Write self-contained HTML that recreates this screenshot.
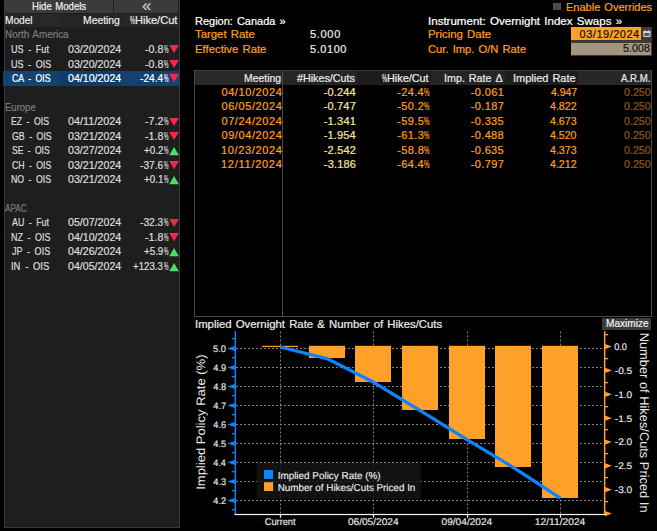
<!DOCTYPE html>
<html><head><meta charset="utf-8"><title>Implied Overnight Rate</title>
<style>
html,body{margin:0;padding:0;background:#000;}
body{width:657px;height:531px;position:relative;overflow:hidden;font-family:"Liberation Sans",sans-serif;}
.t{position:absolute;white-space:pre;line-height:1;transform-origin:0 0;display:block;-webkit-text-stroke:0.22px currentColor;}
.panel{position:absolute;left:4px;top:-1px;width:173.6px;height:527px;background:#1e1e1e;border:1px solid #3a3a3a;}
.btn{position:absolute;background:#3b3b3b;}
.hdr{position:absolute;background:#282828;}
.hdr2{position:absolute;background:#252525;}
.sel{position:absolute;background:#15416f;}
.sel2{position:absolute;background:#123c68;}
.tri{position:absolute;}
.thdr{position:absolute;background:#1d1d1d;}
.thdr2{position:absolute;background:#2a2a2a;}
.ln{position:absolute;background:#4a4a4a;}
svg.chart{position:absolute;left:0;top:0;}
svg.chart text{font-family:"Liberation Sans",sans-serif;stroke-width:0.15px;text-rendering:geometricPrecision;}
.g{stroke:#828282;stroke-width:1;stroke-dasharray:2 2;}
</style></head>
<body>
<div class="panel"></div>
<div class="btn" style="left:5px;top:0.4px;width:108.2px;height:12.3px"></div>
<div class="btn" style="left:114.4px;top:0.4px;width:64px;height:12.3px"></div>
<div class="hdr" style="left:5px;top:13.6px;width:173.4px;height:13.6px"></div>
<div class="hdr2" style="left:59px;top:13.6px;width:62.5px;height:13.6px"></div>
<div class="sel" style="left:3px;top:71px;width:176px;height:15px"></div>
<div class="sel2" style="left:59px;top:71px;width:62.5px;height:15px"></div>
<svg class="tri" style="left:168.6px;top:45.35px" width="10" height="9" viewBox="0 0 10 9"><path d="M0.2 0H9.9L5.05 8.1Z" fill="#f4284e"/></svg>
<svg class="tri" style="left:168.6px;top:59.82px" width="10" height="9" viewBox="0 0 10 9"><path d="M0.2 0H9.9L5.05 8.1Z" fill="#f4284e"/></svg>
<svg class="tri" style="left:168.6px;top:74.28px" width="10" height="9" viewBox="0 0 10 9"><path d="M0.2 0H9.9L5.05 8.1Z" fill="#f4284e"/></svg>
<svg class="tri" style="left:168.6px;top:117.69px" width="10" height="9" viewBox="0 0 10 9"><path d="M0.2 0H9.9L5.05 8.1Z" fill="#f4284e"/></svg>
<svg class="tri" style="left:168.6px;top:132.15px" width="10" height="9" viewBox="0 0 10 9"><path d="M0.2 0H9.9L5.05 8.1Z" fill="#f4284e"/></svg>
<svg class="tri" style="left:168.6px;top:146.87px" width="10" height="9" viewBox="0 0 10 9"><path d="M0.2 8.3H9.9L5.05 0.1Z" fill="#48e06a"/></svg>
<svg class="tri" style="left:168.6px;top:161.09px" width="10" height="9" viewBox="0 0 10 9"><path d="M0.2 0H9.9L5.05 8.1Z" fill="#f4284e"/></svg>
<svg class="tri" style="left:168.6px;top:175.80px" width="10" height="9" viewBox="0 0 10 9"><path d="M0.2 8.3H9.9L5.05 0.1Z" fill="#48e06a"/></svg>
<svg class="tri" style="left:168.6px;top:218.95px" width="10" height="9" viewBox="0 0 10 9"><path d="M0.2 0H9.9L5.05 8.1Z" fill="#f4284e"/></svg>
<svg class="tri" style="left:168.6px;top:233.42px" width="10" height="9" viewBox="0 0 10 9"><path d="M0.2 0H9.9L5.05 8.1Z" fill="#f4284e"/></svg>
<svg class="tri" style="left:168.6px;top:248.14px" width="10" height="9" viewBox="0 0 10 9"><path d="M0.2 8.3H9.9L5.05 0.1Z" fill="#48e06a"/></svg>
<svg class="tri" style="left:168.6px;top:262.61px" width="10" height="9" viewBox="0 0 10 9"><path d="M0.2 8.3H9.9L5.05 0.1Z" fill="#48e06a"/></svg>
<div style="position:absolute;left:553.4px;top:3px;width:8px;height:7.4px;background:#4b4b4b"></div>
<div style="position:absolute;left:571px;top:27px;width:80.8px;height:29.3px;background:#3a3a3a"></div>
<div style="position:absolute;left:571.3px;top:27.2px;width:70px;height:13.3px;background:#ffa02a"></div>
<div style="position:absolute;left:571.4px;top:42.7px;width:79.3px;height:12.5px;background:#a49581"></div>
<svg style="position:absolute;left:641.5px;top:28px" width="10" height="11" viewBox="0 0 10 11"><rect x="1.3" y="3" width="7.1" height="6" fill="#5a5a5a"/><rect x="1.8" y="3.6" width="6.1" height="4.9" fill="none" stroke="#d2d2d2" stroke-width="1"/><rect x="1.3" y="3" width="7.1" height="2" fill="#d2d2d2"/><rect x="2.6" y="1.7" width="1" height="1.4" fill="#a8a8a8"/><rect x="6.2" y="1.7" width="1" height="1.4" fill="#a8a8a8"/></svg>
<div class="thdr" style="left:194px;top:70.4px;width:457.6px;height:14.6px"></div>
<div style="position:absolute;left:194.0px;top:70.4px;width:88.0px;height:14.6px;background:#292929"></div>
<div style="position:absolute;left:283.0px;top:70.4px;width:73.8px;height:14.6px;background:#252525"></div>
<div style="position:absolute;left:430.8px;top:70.4px;width:73.8px;height:14.6px;background:#252525"></div>
<div style="position:absolute;left:577.6px;top:70.4px;width:73.4px;height:14.6px;background:#272727"></div>
<div style="position:absolute;left:194px;top:70.2px;width:457.6px;height:1px;background:#383838"></div>
<div class="ln" style="left:193.6px;top:70.2px;width:1px;height:246.4px"></div>
<div class="ln" style="left:281.8px;top:70.2px;width:1px;height:246.4px"></div>
<div class="ln" style="left:651px;top:70.2px;width:1px;height:246.4px"></div>
<div class="ln" style="left:193.6px;top:315.6px;width:458.4px;height:1px"></div>
<div class="btn" style="left:601.8px;top:318.3px;width:49.5px;height:11.5px"></div>
<svg class="chart" width="657" height="531" viewBox="0 0 657 531">
<line x1="280.5" y1="331.5" x2="280.5" y2="513.5" class="g"/>
<line x1="373.5" y1="331.5" x2="373.5" y2="513.5" class="g"/>
<line x1="467.5" y1="331.5" x2="467.5" y2="513.5" class="g"/>
<line x1="560.5" y1="331.5" x2="560.5" y2="513.5" class="g"/>
<line x1="236" y1="348.50" x2="604" y2="348.50" class="g"/>
<line x1="236" y1="367.50" x2="604" y2="367.50" class="g"/>
<line x1="236" y1="386.50" x2="604" y2="386.50" class="g"/>
<line x1="236" y1="405.50" x2="604" y2="405.50" class="g"/>
<line x1="236" y1="424.50" x2="604" y2="424.50" class="g"/>
<line x1="236" y1="443.50" x2="604" y2="443.50" class="g"/>
<line x1="236" y1="462.50" x2="604" y2="462.50" class="g"/>
<line x1="236" y1="481.50" x2="604" y2="481.50" class="g"/>
<line x1="236" y1="500.50" x2="604" y2="500.50" class="g"/>
<rect x="256.7" y="463.1" width="164.2" height="35.3" rx="2" fill="#151515" fill-opacity="0.82"/>
<rect x="262.00" y="345.80" width="36.00" height="1.20" fill="#ffa028"/>
<rect x="309.00" y="345.80" width="36.00" height="12.20" fill="#ffa028"/>
<rect x="355.00" y="345.80" width="36.00" height="36.20" fill="#ffa028"/>
<rect x="402.00" y="345.80" width="36.00" height="64.20" fill="#ffa028"/>
<rect x="449.00" y="345.80" width="36.00" height="93.20" fill="#ffa028"/>
<rect x="495.00" y="345.80" width="36.00" height="121.20" fill="#ffa028"/>
<rect x="542.00" y="345.80" width="36.00" height="152.20" fill="#ffa028"/>
<polyline points="280.30,346.98 326.97,358.57 373.64,382.32 420.31,410.63 466.98,439.70 513.65,467.63 560.32,498.22" fill="none" stroke="#0a84ff" stroke-width="3.3" stroke-linejoin="round" stroke-linecap="butt"/>
<rect x="234.6" y="331.2" width="1.45" height="183.9" fill="#0a84ff"/>
<path d="M227.3 348.50L235 345.90V351.10Z" fill="#0a84ff"/>
<path d="M227.3 367.50L235 364.90V370.10Z" fill="#0a84ff"/>
<path d="M227.3 386.50L235 383.90V389.10Z" fill="#0a84ff"/>
<path d="M227.3 405.50L235 402.90V408.10Z" fill="#0a84ff"/>
<path d="M227.3 424.50L235 421.90V427.10Z" fill="#0a84ff"/>
<path d="M227.3 443.50L235 440.90V446.10Z" fill="#0a84ff"/>
<path d="M227.3 462.50L235 459.90V465.10Z" fill="#0a84ff"/>
<path d="M227.3 481.50L235 478.90V484.10Z" fill="#0a84ff"/>
<path d="M227.3 500.50L235 497.90V503.10Z" fill="#0a84ff"/>
<rect x="231.8" y="338.00" width="3" height="1.3" fill="#0a84ff"/>
<rect x="231.8" y="357.00" width="3" height="1.3" fill="#0a84ff"/>
<rect x="231.8" y="376.00" width="3" height="1.3" fill="#0a84ff"/>
<rect x="231.8" y="395.00" width="3" height="1.3" fill="#0a84ff"/>
<rect x="231.8" y="414.00" width="3" height="1.3" fill="#0a84ff"/>
<rect x="231.8" y="433.00" width="3" height="1.3" fill="#0a84ff"/>
<rect x="231.8" y="452.00" width="3" height="1.3" fill="#0a84ff"/>
<rect x="231.8" y="471.00" width="3" height="1.3" fill="#0a84ff"/>
<rect x="231.8" y="490.00" width="3" height="1.3" fill="#0a84ff"/>
<rect x="231.8" y="509.00" width="3" height="1.3" fill="#0a84ff"/>
<rect x="603.9" y="331.2" width="1.5" height="183.9" fill="#ffa028"/>
<path d="M611.9 346.60L605 344.00V349.20Z" fill="#ffa028"/>
<path d="M611.9 370.45L605 367.85V373.05Z" fill="#ffa028"/>
<path d="M611.9 394.30L605 391.70V396.90Z" fill="#ffa028"/>
<path d="M611.9 418.15L605 415.55V420.75Z" fill="#ffa028"/>
<path d="M611.9 442.00L605 439.40V444.60Z" fill="#ffa028"/>
<path d="M611.9 465.85L605 463.25V468.45Z" fill="#ffa028"/>
<path d="M611.9 489.70L605 487.10V492.30Z" fill="#ffa028"/>
<path d="M611.9 513.55L605 510.95V516.15Z" fill="#ffa028"/>
<rect x="605" y="334.00" width="3.2" height="1.3" fill="#ffa028"/>
<rect x="605" y="358.00" width="3.2" height="1.3" fill="#ffa028"/>
<rect x="605" y="382.00" width="3.2" height="1.3" fill="#ffa028"/>
<rect x="605" y="406.00" width="3.2" height="1.3" fill="#ffa028"/>
<rect x="605" y="429.00" width="3.2" height="1.3" fill="#ffa028"/>
<rect x="605" y="453.00" width="3.2" height="1.3" fill="#ffa028"/>
<rect x="605" y="477.00" width="3.2" height="1.3" fill="#ffa028"/>
<rect x="605" y="501.00" width="3.2" height="1.3" fill="#ffa028"/>
<rect x="234.6" y="513.9" width="370.8" height="1.2" fill="#f4f4f4"/>
<rect x="279.85" y="514" width="1.3" height="3.7" fill="#f4f4f4"/>
<rect x="372.85" y="514" width="1.3" height="3.7" fill="#f4f4f4"/>
<rect x="466.85" y="514" width="1.3" height="3.7" fill="#f4f4f4"/>
<rect x="559.85" y="514" width="1.3" height="3.7" fill="#f4f4f4"/>
<rect x="264" y="470" width="9.1" height="8.9" fill="#0a84ff"/>
<rect x="264" y="482.2" width="9.1" height="8.8" fill="#ffa028"/>
<text x="213.05" y="352.00" font-size="9.5" fill="#eaeaea" stroke="#eaeaea" textLength="13.06" lengthAdjust="spacingAndGlyphs">5.0</text>
<text x="213.30" y="371.00" font-size="9.5" fill="#eaeaea" stroke="#eaeaea" textLength="12.81" lengthAdjust="spacingAndGlyphs">4.9</text>
<text x="213.30" y="390.00" font-size="9.5" fill="#eaeaea" stroke="#eaeaea" textLength="12.81" lengthAdjust="spacingAndGlyphs">4.8</text>
<text x="213.30" y="409.00" font-size="9.5" fill="#eaeaea" stroke="#eaeaea" textLength="12.81" lengthAdjust="spacingAndGlyphs">4.7</text>
<text x="213.30" y="428.00" font-size="9.5" fill="#eaeaea" stroke="#eaeaea" textLength="12.81" lengthAdjust="spacingAndGlyphs">4.6</text>
<text x="213.30" y="447.00" font-size="9.5" fill="#eaeaea" stroke="#eaeaea" textLength="12.81" lengthAdjust="spacingAndGlyphs">4.5</text>
<text x="213.30" y="466.00" font-size="9.5" fill="#eaeaea" stroke="#eaeaea" textLength="12.57" lengthAdjust="spacingAndGlyphs">4.4</text>
<text x="213.30" y="485.00" font-size="9.5" fill="#eaeaea" stroke="#eaeaea" textLength="12.81" lengthAdjust="spacingAndGlyphs">4.3</text>
<text x="213.30" y="504.00" font-size="9.5" fill="#eaeaea" stroke="#eaeaea" textLength="12.81" lengthAdjust="spacingAndGlyphs">4.2</text>
<text x="614.16" y="350.00" font-size="9.5" fill="#eaeaea" stroke="#eaeaea" textLength="12.86" lengthAdjust="spacingAndGlyphs">0.0</text>
<text x="614.83" y="373.85" font-size="9.5" fill="#eaeaea" stroke="#eaeaea" textLength="17.40" lengthAdjust="spacingAndGlyphs">-0.5</text>
<text x="614.83" y="397.70" font-size="9.5" fill="#eaeaea" stroke="#eaeaea" textLength="17.40" lengthAdjust="spacingAndGlyphs">-1.0</text>
<text x="614.83" y="421.55" font-size="9.5" fill="#eaeaea" stroke="#eaeaea" textLength="17.40" lengthAdjust="spacingAndGlyphs">-1.5</text>
<text x="614.83" y="445.40" font-size="9.5" fill="#eaeaea" stroke="#eaeaea" textLength="17.40" lengthAdjust="spacingAndGlyphs">-2.0</text>
<text x="614.83" y="469.25" font-size="9.5" fill="#eaeaea" stroke="#eaeaea" textLength="17.40" lengthAdjust="spacingAndGlyphs">-2.5</text>
<text x="614.83" y="493.10" font-size="9.5" fill="#eaeaea" stroke="#eaeaea" textLength="17.40" lengthAdjust="spacingAndGlyphs">-3.0</text>
<text x="264.76" y="525.00" font-size="9.75" fill="#eaeaea" stroke="#eaeaea" textLength="30.81" lengthAdjust="spacingAndGlyphs">Current</text>
<text x="347.94" y="525.00" font-size="9.75" fill="#eaeaea" stroke="#eaeaea" textLength="50.62" lengthAdjust="spacingAndGlyphs">06/05/2024</text>
<text x="441.54" y="525.00" font-size="9.75" fill="#eaeaea" stroke="#eaeaea" textLength="50.72" lengthAdjust="spacingAndGlyphs">09/04/2024</text>
<text x="534.88" y="525.00" font-size="9.75" fill="#eaeaea" stroke="#eaeaea" textLength="50.41" lengthAdjust="spacingAndGlyphs">12/11/2024</text>
<text x="277.66" y="479.00" font-size="10" fill="#eaeaea" stroke="#eaeaea" textLength="102.96" lengthAdjust="spacingAndGlyphs">Implied Policy Rate (%)</text>
<text x="277.66" y="491.00" font-size="10" fill="#eaeaea" stroke="#eaeaea" textLength="137.69" lengthAdjust="spacingAndGlyphs">Number of Hikes/Cuts Priced In</text>
<text transform="translate(205.1,488.80) rotate(-90)" x="-1.06" y="0" font-size="12.3" fill="#eaeaea" textLength="135.40" lengthAdjust="spacingAndGlyphs">Implied Policy Rate (%)</text>
<text transform="translate(639.6,333.70) rotate(90)" x="-1.02" y="0" font-size="12.6" fill="#eaeaea" textLength="179.86" lengthAdjust="spacingAndGlyphs">Number of Hikes/Cuts Priced In</text>
</svg>
<span class="t" style="left:31.64px;top:1.00px;font-size:11px;color:#f0f0f0;word-spacing:1px;transform:scaleX(0.8713)">Hide Models</span>
<span class="t" style="left:142.17px;top:-3.00px;font-size:17px;color:#cfcfcf;transform:scaleX(0.9828)">«</span>
<span class="t" style="left:4.80px;top:15.00px;font-size:11px;color:#eaeaea;transform:scaleX(0.9198)">Model</span>
<span class="t" style="left:83.29px;top:15.00px;font-size:11px;color:#eaeaea;transform:scaleX(0.9421)">Meeting</span>
<span class="t" style="left:129.90px;top:15.00px;font-size:11px;color:#eaeaea;transform:scaleX(0.5104)">%</span>
<span class="t" style="left:135.05px;top:15.00px;font-size:11px;color:#eaeaea;transform:scaleX(1.0048)">Hike/Cut</span>
<span class="t" style="left:4.82px;top:29.00px;font-size:11px;color:#7c7c7c;word-spacing:1px;transform:scaleX(0.8998)">North America</span>
<span class="t" style="left:11.48px;top:44.00px;font-size:11px;color:#dcdcdc;word-spacing:2.5px;transform:scaleX(0.8253)">US - Fut</span>
<span class="t" style="left:68.06px;top:44.00px;font-size:11px;color:#dcdcdc;transform:scaleX(0.9664)">03/20/2024</span>
<span class="t" style="left:144.66px;top:44.00px;font-size:11px;color:#dcdcdc;transform:scaleX(0.9701)">-0.8</span>
<span class="t" style="left:164.11px;top:44.00px;font-size:11px;color:#dcdcdc;transform:scaleX(0.4616)">%</span>
<span class="t" style="left:11.27px;top:59.00px;font-size:11px;color:#dcdcdc;word-spacing:2.5px;transform:scaleX(0.8198)">US - OIS</span>
<span class="t" style="left:68.06px;top:59.00px;font-size:11px;color:#dcdcdc;transform:scaleX(0.9664)">03/20/2024</span>
<span class="t" style="left:144.66px;top:59.00px;font-size:11px;color:#dcdcdc;transform:scaleX(0.9701)">-0.8</span>
<span class="t" style="left:164.11px;top:59.00px;font-size:11px;color:#dcdcdc;transform:scaleX(0.4616)">%</span>
<span class="t" style="left:11.70px;top:73.00px;font-size:11px;color:#ffffff;word-spacing:2.5px;transform:scaleX(0.7979)">CA - OIS</span>
<span class="t" style="left:68.06px;top:73.00px;font-size:11px;color:#ffffff;transform:scaleX(0.9664)">04/10/2024</span>
<span class="t" style="left:139.75px;top:73.00px;font-size:11px;color:#ffffff;transform:scaleX(0.9259)">-24.4</span>
<span class="t" style="left:164.11px;top:73.00px;font-size:11px;color:#ffffff;transform:scaleX(0.4616)">%</span>
<span class="t" style="left:10.93px;top:116.00px;font-size:11px;color:#dcdcdc;word-spacing:2.5px;transform:scaleX(0.7948)">EZ - OIS</span>
<span class="t" style="left:67.53px;top:116.00px;font-size:11px;color:#dcdcdc;transform:scaleX(0.9808)">04/11/2024</span>
<span class="t" style="left:144.71px;top:116.00px;font-size:11px;color:#dcdcdc;transform:scaleX(0.9690)">-7.2</span>
<span class="t" style="left:164.11px;top:116.00px;font-size:11px;color:#dcdcdc;transform:scaleX(0.4616)">%</span>
<span class="t" style="left:11.96px;top:131.00px;font-size:11px;color:#dcdcdc;word-spacing:2.5px;transform:scaleX(0.8005)">GB - OIS</span>
<span class="t" style="left:68.06px;top:131.00px;font-size:11px;color:#dcdcdc;transform:scaleX(0.9664)">03/21/2024</span>
<span class="t" style="left:144.66px;top:131.00px;font-size:11px;color:#dcdcdc;transform:scaleX(0.9701)">-1.8</span>
<span class="t" style="left:164.11px;top:131.00px;font-size:11px;color:#dcdcdc;transform:scaleX(0.4616)">%</span>
<span class="t" style="left:11.71px;top:145.00px;font-size:11px;color:#dcdcdc;word-spacing:2.5px;transform:scaleX(0.7792)">SE - OIS</span>
<span class="t" style="left:68.06px;top:145.00px;font-size:11px;color:#dcdcdc;transform:scaleX(0.9664)">03/27/2024</span>
<span class="t" style="left:144.27px;top:145.00px;font-size:11px;color:#dcdcdc;transform:scaleX(0.8901)">+0.2</span>
<span class="t" style="left:164.11px;top:145.00px;font-size:11px;color:#dcdcdc;transform:scaleX(0.4616)">%</span>
<span class="t" style="left:11.65px;top:160.00px;font-size:11px;color:#dcdcdc;word-spacing:2.5px;transform:scaleX(0.7917)">CH - OIS</span>
<span class="t" style="left:68.06px;top:160.00px;font-size:11px;color:#dcdcdc;transform:scaleX(0.9664)">03/21/2024</span>
<span class="t" style="left:139.83px;top:160.00px;font-size:11px;color:#dcdcdc;transform:scaleX(0.9288)">-37.6</span>
<span class="t" style="left:164.11px;top:160.00px;font-size:11px;color:#dcdcdc;transform:scaleX(0.4616)">%</span>
<span class="t" style="left:11.13px;top:174.00px;font-size:11px;color:#dcdcdc;word-spacing:2.5px;transform:scaleX(0.7973)">NO - OIS</span>
<span class="t" style="left:68.06px;top:174.00px;font-size:11px;color:#dcdcdc;transform:scaleX(0.9664)">03/21/2024</span>
<span class="t" style="left:144.27px;top:174.00px;font-size:11px;color:#dcdcdc;transform:scaleX(0.8952)">+0.1</span>
<span class="t" style="left:164.11px;top:174.00px;font-size:11px;color:#dcdcdc;transform:scaleX(0.4616)">%</span>
<span class="t" style="left:12.13px;top:217.00px;font-size:11px;color:#dcdcdc;word-spacing:2.5px;transform:scaleX(0.8038)">AU - Fut</span>
<span class="t" style="left:68.06px;top:217.00px;font-size:11px;color:#dcdcdc;transform:scaleX(0.9664)">05/07/2024</span>
<span class="t" style="left:139.83px;top:217.00px;font-size:11px;color:#dcdcdc;transform:scaleX(0.9291)">-32.3</span>
<span class="t" style="left:164.11px;top:217.00px;font-size:11px;color:#dcdcdc;transform:scaleX(0.4616)">%</span>
<span class="t" style="left:11.29px;top:232.00px;font-size:11px;color:#dcdcdc;word-spacing:2.5px;transform:scaleX(0.8189)">NZ - OIS</span>
<span class="t" style="left:68.06px;top:232.00px;font-size:11px;color:#dcdcdc;transform:scaleX(0.9664)">04/10/2024</span>
<span class="t" style="left:144.66px;top:232.00px;font-size:11px;color:#dcdcdc;transform:scaleX(0.9701)">-1.8</span>
<span class="t" style="left:164.11px;top:232.00px;font-size:11px;color:#dcdcdc;transform:scaleX(0.4616)">%</span>
<span class="t" style="left:11.82px;top:246.00px;font-size:11px;color:#dcdcdc;word-spacing:2.5px;transform:scaleX(0.8251)">JP - OIS</span>
<span class="t" style="left:68.06px;top:246.00px;font-size:11px;color:#dcdcdc;transform:scaleX(0.9664)">04/26/2024</span>
<span class="t" style="left:144.27px;top:246.00px;font-size:11px;color:#dcdcdc;transform:scaleX(0.8873)">+5.9</span>
<span class="t" style="left:164.11px;top:246.00px;font-size:11px;color:#dcdcdc;transform:scaleX(0.4616)">%</span>
<span class="t" style="left:11.26px;top:261.00px;font-size:11px;color:#dcdcdc;word-spacing:2.5px;transform:scaleX(0.8549)">IN - OIS</span>
<span class="t" style="left:68.06px;top:261.00px;font-size:11px;color:#dcdcdc;transform:scaleX(0.9664)">04/05/2024</span>
<span class="t" style="left:133.38px;top:261.00px;font-size:11px;color:#dcdcdc;transform:scaleX(0.8806)">+123.3</span>
<span class="t" style="left:164.11px;top:261.00px;font-size:11px;color:#dcdcdc;transform:scaleX(0.4616)">%</span>
<span class="t" style="left:4.57px;top:102.00px;font-size:11px;color:#7c7c7c;transform:scaleX(0.8649)">Europe</span>
<span class="t" style="left:5.39px;top:203.00px;font-size:11px;color:#7c7c7c;transform:scaleX(0.7419)">APAC</span>
<span class="t" style="left:195.03px;top:16.00px;font-size:11px;color:#ffffff;word-spacing:1px;transform:scaleX(0.9991)">Region: Canada »</span>
<span class="t" style="left:195.20px;top:29.00px;font-size:11px;color:#ff9f1e;word-spacing:1px;transform:scaleX(1.0338)">Target Rate</span>
<span class="t" style="left:194.56px;top:44.00px;font-size:11px;color:#ff9f1e;word-spacing:1px;transform:scaleX(1.0308)">Effective Rate</span>
<span class="t" style="left:310.05px;top:29.00px;font-size:11px;color:#eaeaea;letter-spacing:0.672px;transform:scaleX(1.0000)">5.000</span>
<span class="t" style="left:310.11px;top:44.00px;font-size:11px;color:#eaeaea;letter-spacing:0.528px;transform:scaleX(1.0000)">5.0100</span>
<span class="t" style="left:565.95px;top:2.00px;font-size:11px;color:#ff9f1e;word-spacing:1px;transform:scaleX(1.0012)">Enable Overrides</span>
<span class="t" style="left:427.71px;top:16.00px;font-size:11px;color:#ffffff;word-spacing:1px;transform:scaleX(1.0495)">Instrument: Overnight Index Swaps »</span>
<span class="t" style="left:427.72px;top:29.00px;font-size:11px;color:#ff9f1e;word-spacing:1px;transform:scaleX(1.0367)">Pricing Date</span>
<span class="t" style="left:428.25px;top:44.00px;font-size:11px;color:#ff9f1e;word-spacing:1px;transform:scaleX(1.0167)">Cur. Imp. O/N Rate</span>
<span class="t" style="left:579.59px;top:29.00px;font-size:11px;color:#151008;letter-spacing:0.505px;transform:scaleX(1.0000)">03/19/2024</span>
<span class="t" style="left:622.89px;top:43.00px;font-size:11px;color:#15120e;transform:scaleX(0.9832)">5.008</span>
<span class="t" style="left:243.99px;top:73.00px;font-size:11px;color:#eaeaea;transform:scaleX(0.9474)">Meeting</span>
<span class="t" style="left:297.39px;top:73.00px;font-size:11px;color:#eaeaea;transform:scaleX(0.9761)">#Hikes/Cuts</span>
<span class="t" style="left:381.66px;top:73.00px;font-size:11px;color:#eaeaea;transform:scaleX(0.5071)">%</span>
<span class="t" style="left:386.92px;top:73.00px;font-size:11px;color:#eaeaea;transform:scaleX(0.9872)">Hike/Cut</span>
<span class="t" style="left:444.27px;top:73.00px;font-size:11px;color:#eaeaea;word-spacing:1px;transform:scaleX(0.9755)">Imp. Rate Δ</span>
<span class="t" style="left:513.05px;top:73.00px;font-size:11px;color:#eaeaea;word-spacing:1px;transform:scaleX(0.9976)">Implied Rate</span>
<span class="t" style="left:621.22px;top:73.00px;font-size:11px;color:#eaeaea;transform:scaleX(0.8722)">A.R.M.</span>
<span class="t" style="left:221.43px;top:87.00px;font-size:11px;color:#ff9f1e;letter-spacing:0.597px;transform:scaleX(1.0000)">04/10/2024</span>
<span class="t" style="left:323.69px;top:87.00px;font-size:11px;color:#f6e79a;letter-spacing:0.147px;transform:scaleX(1.0000)">-0.244</span>
<span class="t" style="left:397.25px;top:87.00px;font-size:11px;color:#ff9f1e;letter-spacing:0.338px;transform:scaleX(1.0000)">-24.4</span>
<span class="t" style="left:424.06px;top:87.00px;font-size:11px;color:#ff9f1e;transform:scaleX(0.5579)">%</span>
<span class="t" style="left:470.79px;top:87.00px;font-size:11px;color:#ff9f1e;letter-spacing:0.358px;transform:scaleX(1.0000)">-0.061</span>
<span class="t" style="left:550.63px;top:87.00px;font-size:11px;color:#ff9f1e;transform:scaleX(0.9513)">4.947</span>
<span class="t" style="left:623.94px;top:87.00px;font-size:11px;color:#8f5b12;transform:scaleX(0.9675)">0.250</span>
<span class="t" style="left:221.43px;top:101.00px;font-size:11px;color:#ff9f1e;letter-spacing:0.597px;transform:scaleX(1.0000)">06/05/2024</span>
<span class="t" style="left:323.66px;top:101.00px;font-size:11px;color:#f6e79a;letter-spacing:0.187px;transform:scaleX(1.0000)">-0.747</span>
<span class="t" style="left:397.25px;top:101.00px;font-size:11px;color:#ff9f1e;letter-spacing:0.400px;transform:scaleX(1.0000)">-50.2</span>
<span class="t" style="left:424.06px;top:101.00px;font-size:11px;color:#ff9f1e;transform:scaleX(0.5579)">%</span>
<span class="t" style="left:470.76px;top:101.00px;font-size:11px;color:#ff9f1e;letter-spacing:0.381px;transform:scaleX(1.0000)">-0.187</span>
<span class="t" style="left:550.30px;top:101.00px;font-size:11px;color:#ff9f1e;transform:scaleX(0.9651)">4.822</span>
<span class="t" style="left:623.94px;top:101.00px;font-size:11px;color:#8f5b12;transform:scaleX(0.9675)">0.250</span>
<span class="t" style="left:221.43px;top:116.00px;font-size:11px;color:#ff9f1e;letter-spacing:0.597px;transform:scaleX(1.0000)">07/24/2024</span>
<span class="t" style="left:323.70px;top:116.00px;font-size:11px;color:#f6e79a;letter-spacing:0.200px;transform:scaleX(1.0000)">-1.341</span>
<span class="t" style="left:397.25px;top:116.00px;font-size:11px;color:#ff9f1e;letter-spacing:0.400px;transform:scaleX(1.0000)">-59.5</span>
<span class="t" style="left:424.06px;top:116.00px;font-size:11px;color:#ff9f1e;transform:scaleX(0.5579)">%</span>
<span class="t" style="left:470.75px;top:116.00px;font-size:11px;color:#ff9f1e;letter-spacing:0.350px;transform:scaleX(1.0000)">-0.335</span>
<span class="t" style="left:550.30px;top:116.00px;font-size:11px;color:#ff9f1e;transform:scaleX(0.9651)">4.673</span>
<span class="t" style="left:623.94px;top:116.00px;font-size:11px;color:#8f5b12;transform:scaleX(0.9675)">0.250</span>
<span class="t" style="left:221.43px;top:130.00px;font-size:11px;color:#ff9f1e;letter-spacing:0.597px;transform:scaleX(1.0000)">09/04/2024</span>
<span class="t" style="left:323.69px;top:130.00px;font-size:11px;color:#f6e79a;letter-spacing:0.147px;transform:scaleX(1.0000)">-1.954</span>
<span class="t" style="left:397.25px;top:130.00px;font-size:11px;color:#ff9f1e;letter-spacing:0.400px;transform:scaleX(1.0000)">-61.3</span>
<span class="t" style="left:424.06px;top:130.00px;font-size:11px;color:#ff9f1e;transform:scaleX(0.5579)">%</span>
<span class="t" style="left:470.75px;top:130.00px;font-size:11px;color:#ff9f1e;letter-spacing:0.350px;transform:scaleX(1.0000)">-0.488</span>
<span class="t" style="left:550.30px;top:130.00px;font-size:11px;color:#ff9f1e;transform:scaleX(0.9569)">4.520</span>
<span class="t" style="left:623.94px;top:130.00px;font-size:11px;color:#8f5b12;transform:scaleX(0.9675)">0.250</span>
<span class="t" style="left:221.00px;top:145.00px;font-size:11px;color:#ff9f1e;letter-spacing:0.633px;transform:scaleX(1.0000)">10/23/2024</span>
<span class="t" style="left:323.71px;top:145.00px;font-size:11px;color:#f6e79a;letter-spacing:0.205px;transform:scaleX(1.0000)">-2.542</span>
<span class="t" style="left:397.25px;top:145.00px;font-size:11px;color:#ff9f1e;letter-spacing:0.400px;transform:scaleX(1.0000)">-58.8</span>
<span class="t" style="left:424.06px;top:145.00px;font-size:11px;color:#ff9f1e;transform:scaleX(0.5579)">%</span>
<span class="t" style="left:470.75px;top:145.00px;font-size:11px;color:#ff9f1e;letter-spacing:0.350px;transform:scaleX(1.0000)">-0.635</span>
<span class="t" style="left:550.30px;top:145.00px;font-size:11px;color:#ff9f1e;transform:scaleX(0.9651)">4.373</span>
<span class="t" style="left:623.94px;top:145.00px;font-size:11px;color:#8f5b12;transform:scaleX(0.9675)">0.250</span>
<span class="t" style="left:221.03px;top:159.00px;font-size:11px;color:#ff9f1e;letter-spacing:0.732px;transform:scaleX(1.0000)">12/11/2024</span>
<span class="t" style="left:323.80px;top:159.00px;font-size:11px;color:#f6e79a;letter-spacing:0.173px;transform:scaleX(1.0000)">-3.186</span>
<span class="t" style="left:397.25px;top:159.00px;font-size:11px;color:#ff9f1e;letter-spacing:0.338px;transform:scaleX(1.0000)">-64.4</span>
<span class="t" style="left:424.06px;top:159.00px;font-size:11px;color:#ff9f1e;transform:scaleX(0.5579)">%</span>
<span class="t" style="left:470.76px;top:159.00px;font-size:11px;color:#ff9f1e;letter-spacing:0.381px;transform:scaleX(1.0000)">-0.797</span>
<span class="t" style="left:550.30px;top:159.00px;font-size:11px;color:#ff9f1e;transform:scaleX(0.9651)">4.212</span>
<span class="t" style="left:623.94px;top:159.00px;font-size:11px;color:#8f5b12;transform:scaleX(0.9675)">0.250</span>
<span class="t" style="left:195.31px;top:319.00px;font-size:11px;color:#eaeaea;word-spacing:1px;transform:scaleX(1.0319)">Implied Overnight Rate &amp; Number of Hikes/Cuts</span>
<span class="t" style="left:605.81px;top:318.00px;font-size:11px;color:#f0f0f0;transform:scaleX(0.9175)">Maximize</span>
</body></html>
